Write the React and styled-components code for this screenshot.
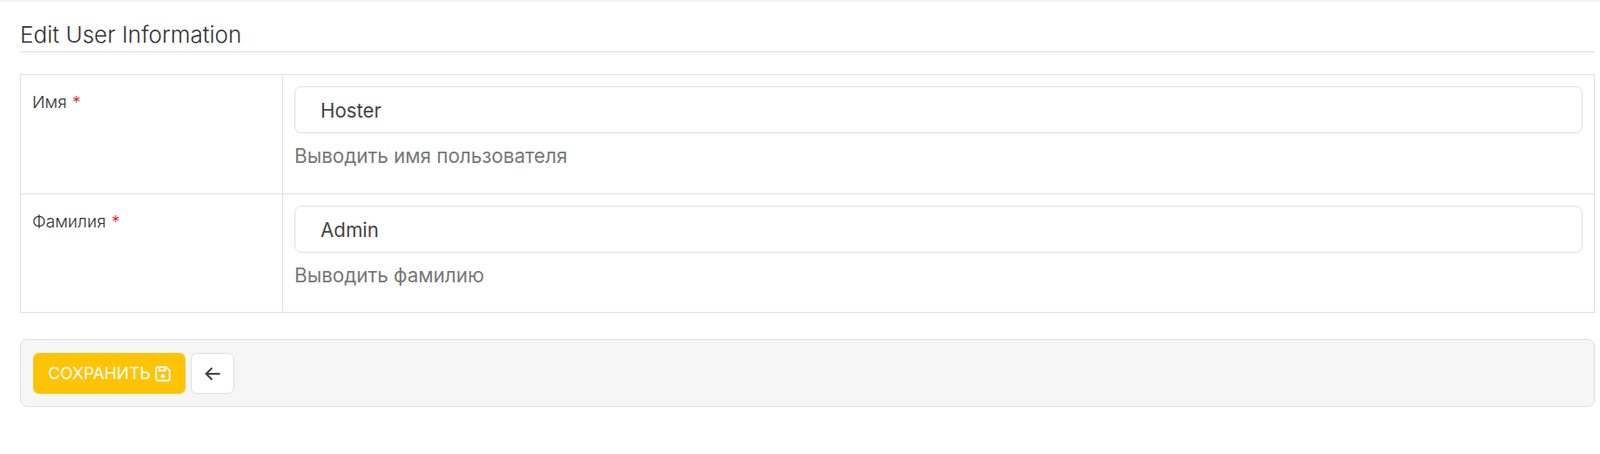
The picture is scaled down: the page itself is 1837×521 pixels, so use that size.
import React from "react";
import styled, { createGlobalStyle } from "styled-components";

const GlobalStyle = createGlobalStyle`
  html, body {
    margin: 0;
    padding: 0;
    background: #fff;
    font-family: Inter, "Noto Sans", sans-serif;
    color: #333;
  }
  * {
    box-sizing: border-box;
  }
`;

const Page = styled.div`
  border-top: 2px solid #f5f5f5;
  padding: 0 6px 0 23px;
`;

const Heading = styled.h3`
  margin: 0 0 25px;
  padding: 20px 0 0 0;
  height: 58px;
  border-bottom: 1px solid #dedede;
  font-size: 26.1px;
  line-height: 35px;
  font-weight: 300;
  color: #333;
`;

const FormTable = styled.div`
  border: 1px solid #dedede;
`;

const Row = styled.div`
  display: grid;
  grid-template-columns: 301px 1fr;
  height: 136px;
  & + & {
    border-top: 1px solid #dedede;
  }
`;

const LabelCell = styled.div`
  padding: 17px 13px;
  font-size: 19.2px;
  line-height: 28px;
  font-weight: 300;
  border-right: 1px solid #dedede;
`;

const Required = styled.span`
  color: #f00;
  margin-left: 1px;
`;

const FieldCell = styled.div`
  padding: 13px 13px 0 13px;
`;

const Input = styled.input`
  display: block;
  width: 100%;
  height: 54px;
  padding: 0 29px;
  border: 1px solid #dedede;
  border-radius: 8px;
  background: #fff;
  font-family: inherit;
  font-size: 22.2px;
  color: #444;
  outline: none;
`;

const Hint = styled.div`
  margin-top: 11px;
  font-size: 22.4px;
  line-height: 29px;
  color: #777;
`;

const Footer = styled.div`
  display: flex;
  align-items: flex-start;
  gap: 6px;
  height: 78px;
  margin-top: 30px;
  padding: 15px 14px;
  background: #f6f6f6;
  border: 1px solid #dedede;
  border-radius: 8px;
`;

const SaveButton = styled.button`
  display: flex;
  align-items: center;
  justify-content: center;
  gap: 5px;
  width: 175px;
  height: 47px;
  padding: 0;
  border: 0;
  border-radius: 7px;
  background: #ffc408;
  color: #fff;
  font-family: inherit;
  font-size: 19px;
`;

const BackButton = styled.button`
  display: flex;
  align-items: center;
  justify-content: center;
  width: 50px;
  height: 47px;
  padding: 0;
  border: 1px solid #dedede;
  border-radius: 7px;
  background: #fff;
  color: #444;
`;

const SaveIcon = () => (
  <svg width="18" height="18" viewBox="0 0 18 18" fill="none" stroke="currentColor" strokeWidth="2">
    <path d="M3.5 1.2h9.2l4.1 4.1v9.2a2.3 2.3 0 0 1-2.3 2.3H3.5a2.3 2.3 0 0 1-2.3-2.3v-11a2.3 2.3 0 0 1 2.3-2.3z" />
    <path d="M5 1.5v3.7h6.5V1.8" />
    <circle cx="9" cy="11.6" r="2.4" fill="currentColor" stroke="none" />
  </svg>
);

const ArrowIcon = () => (
  <svg width="18" height="16" viewBox="0 0 18 16" fill="none" stroke="currentColor" strokeWidth="2.2">
    <path d="M17.5 8H2" />
    <path d="M8.5 1.2L1.7 8l6.8 6.8" />
  </svg>
);

const fields = [
  { label: "Имя", value: "Hoster", hint: "Выводить имя пользователя" },
  { label: "Фамилия", value: "Admin", hint: "Выводить фамилию" },
];

export default function App() {
  return (
    <Page>
      <GlobalStyle />
      <Heading>Edit User Information</Heading>
      <FormTable>
        {fields.map((field) => (
          <Row key={field.label}>
            <LabelCell>
              {field.label} <Required>*</Required>
            </LabelCell>
            <FieldCell>
              <Input defaultValue={field.value} />
              <Hint>{field.hint}</Hint>
            </FieldCell>
          </Row>
        ))}
      </FormTable>
      <Footer>
        <SaveButton>
          СОХРАНИТЬ <SaveIcon />
        </SaveButton>
        <BackButton>
          <ArrowIcon />
        </BackButton>
      </Footer>
    </Page>
  );
}
